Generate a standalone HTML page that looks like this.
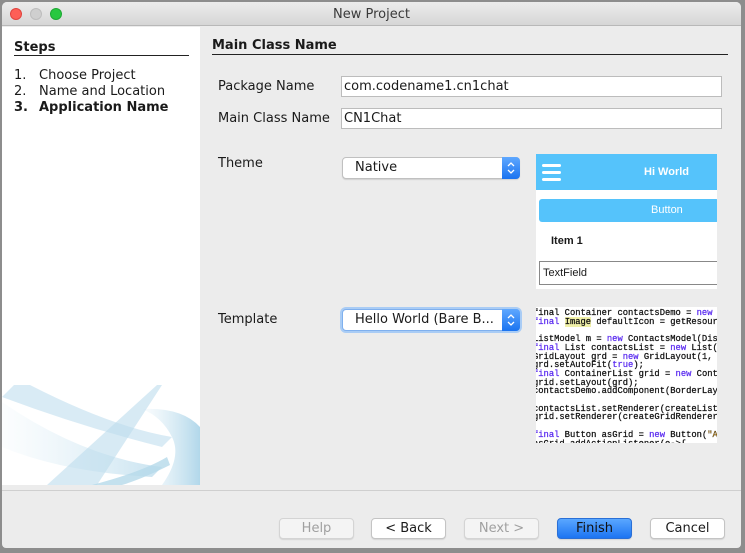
<!DOCTYPE html>
<html><head><meta charset="utf-8"><style>
*{margin:0;padding:0;box-sizing:border-box}
body{width:745px;height:553px;background:#8d8d8d;position:relative;overflow:hidden;font-family:"DejaVu Sans","Liberation Sans",sans-serif;font-size:13px;color:#1a1a1a}
.a{position:absolute}
#win{left:2px;top:2px;width:739px;height:546px;background:#ececec;border-radius:5px 5px 4px 4px;overflow:hidden}
#title{left:0;top:0;width:739px;height:24px;background:linear-gradient(#ececec,#d6d6d6);border-bottom:1px solid #b8b8b8;text-align:center;line-height:26px;color:#3a3a3a;font-size:13px}
.dot{top:6px;width:12px;height:12px;border-radius:50%}
.f{background:#fff;border:1px solid #bcbcbc;height:21px;line-height:19px;padding-left:2px;font-size:13px}
.sel{background:#fff;border:1px solid #c0c0c0;border-radius:4px;height:22px;line-height:20px;padding-left:12px;font-size:13px;box-shadow:0 1px 1px rgba(0,0,0,.12)}
.arr{position:absolute;right:-1px;top:-1px;width:18px;height:22px;background:linear-gradient(#5fa8ff,#1a73f0);border-radius:0 4px 4px 0}
.btn{top:516px;height:21px;border-radius:4px;background:#fff;border:1px solid #c4c4c4;text-align:center;line-height:19px;font-size:13px;box-shadow:0 1px 1px rgba(0,0,0,.1)}
.dis{background:#f4f4f4;color:#a0a0a0;border-color:#d4d4d4}
pre{font-family:"Liberation Mono",monospace;font-size:8.8px;line-height:8.7px;color:#111;-webkit-text-stroke:0.25px #111}
.k{color:#5b2cf0;-webkit-text-stroke:0.25px #5b2cf0}
</style></head><body>
<div id="win" class="a">
<div id="title" class="a">New Project</div>
<div class="a dot" style="left:8px;background:#fd5f57;border:1px solid #e0443e"></div>
<div class="a dot" style="left:28px;background:#cfcfcf;border:1px solid #bdbdbd"></div>
<div class="a dot" style="left:48px;background:#28c840;border:1px solid #1ea834"></div>
<!-- left panel -->
<div class="a" style="left:0;top:25px;width:198px;height:458px;background:#fff;overflow:hidden">
<div class="a" style="left:12px;top:13px;font-weight:bold">Steps</div>
<div class="a" style="left:12px;top:28px;width:175px;height:1px;background:#222"></div>
<div class="a" style="left:12px;top:41px">1.</div><div class="a" style="left:37px;top:41px">Choose Project</div>
<div class="a" style="left:12px;top:57px">2.</div><div class="a" style="left:37px;top:57px">Name and Location</div>
<div class="a" style="left:12px;top:73px;font-weight:bold">3.</div><div class="a" style="left:37px;top:73px;font-weight:bold">Application Name</div>
<svg class="a" style="left:0;top:330px" width="198" height="128" viewBox="0 0 198 128">
<defs><linearGradient id="g" x1="0" x2="1"><stop offset="0" stop-color="#cfe6f2" stop-opacity=".1"/><stop offset="1" stop-color="#a9d3e8" stop-opacity=".9"/></linearGradient></defs>
<path d="M12 28 L28 28 Q110 70 170 80 L160 90 Q80 70 0 40Z" fill="#cfe6f2" opacity=".8"/>
<path d="M0 45 Q80 100 160 110 L150 120 Q60 115 0 90Z" fill="url(#g)" opacity=".7"/>
<path d="M140 52 Q180 50 198 70 L198 128 L160 128 Q180 100 170 80 Q160 60 140 52Z" fill="url(#g)"/>
<path d="M155 28 L160 28 L95 128 L45 128Z" fill="#bddcec" opacity=".6"/>
<path d="M90 128 Q140 115 165 100 L168 108 Q140 122 120 128Z" fill="#b5d9ea" opacity=".8"/>
</svg>
</div>
<!-- right -->
<div class="a" style="left:210px;top:36px;font-weight:bold">Main Class Name</div>
<div class="a" style="left:210px;top:52px;width:516px;height:1px;background:#222"></div>
<div class="a" style="left:216px;top:77px">Package Name</div>
<div class="a f" style="left:339px;top:74px;width:381px">com.codename1.cn1chat</div>
<div class="a" style="left:216px;top:109px">Main Class Name</div>
<div class="a f" style="left:339px;top:106px;width:381px">CN1Chat</div>
<div class="a" style="left:216px;top:154px">Theme</div>
<div class="a sel" style="left:340px;top:155px;width:178px">Native<div class="arr"><svg width="18" height="22"><path d="M6 9 L9 6 L12 9 M6 13 L9 16 L12 13" fill="none" stroke="#fff" stroke-width="1.3"/></svg></div></div>
<div class="a" style="left:216px;top:310px">Template</div>
<div class="a sel" style="left:340px;top:307px;width:178px;border-color:#7fb0ee;box-shadow:0 0 0 2px #a9ccf5">Hello World (Bare B...<div class="arr"><svg width="18" height="22"><path d="M6 9 L9 6 L12 9 M6 13 L9 16 L12 13" fill="none" stroke="#fff" stroke-width="1.3"/></svg></div></div>
<!-- preview -->
<div class="a" style="left:534px;top:152px;width:181px;height:135px;background:#fff;overflow:hidden">
<div class="a" style="left:0;top:0;width:181px;height:36px;background:#55c3fb"></div>
<div class="a" style="left:6px;top:10px;width:19px;height:3px;background:#fff;border-radius:2px"></div>
<div class="a" style="left:6px;top:17px;width:19px;height:3px;background:#fff;border-radius:2px"></div>
<div class="a" style="left:6px;top:24px;width:19px;height:3px;background:#fff;border-radius:2px"></div>
<div class="a" style="left:108px;top:12px;color:#fff;font-family:'Liberation Sans',sans-serif;font-weight:bold;font-size:11px">Hi World</div>
<div class="a" style="left:3px;top:45px;width:180px;height:23px;background:#55c3fb;border-radius:3px;color:#fff;font-family:'Liberation Sans',sans-serif;font-size:11px;line-height:23px;padding-left:112px">Button</div>
<div class="a" style="left:15px;top:81px;font-family:'Liberation Sans',sans-serif;font-weight:bold;font-size:11px">Item 1</div>
<div class="a" style="left:3px;top:107px;width:180px;height:24px;border:1px solid #888;font-family:'Liberation Sans',sans-serif;font-size:11px;line-height:22px;padding-left:3px">TextField</div>
</div>
<div class="a" style="left:534px;top:305px;width:181px;height:136px;background:#fff;overflow:hidden">
<pre style="margin-left:-3px;margin-top:2px">final Container contactsDemo = <span class="k">new</span>
<span class="k">final</span> <span style="background:#f0f0a8">Image</span> defaultIcon = getResour
 
ListModel m = <span class="k">new</span> ContactsModel(Dis
<span class="k">final</span> List contactsList = <span class="k">new</span> List(
GridLayout grd = <span class="k">new</span> GridLayout(1,
grd.setAutoFit(<span class="k">true</span>);
<span class="k">final</span> ContainerList grid = <span class="k">new</span> Cont
grid.setLayout(grd);
contactsDemo.addComponent(BorderLay
 
contactsList.setRenderer(createList
grid.setRenderer(createGridRenderer
 
<span class="k">final</span> Button asGrid = <span class="k">new</span> Button(<span style="color:#c80">"A</span>
asGrid.addActionListener(e-&gt;{</pre>
</div>
<div class="a" style="left:0;top:488px;width:739px;height:1px;background:#cfcfcf"></div>
<div class="a btn dis" style="left:277px;width:75px">Help</div>
<div class="a btn" style="left:369px;width:75px">&lt; Back</div>
<div class="a btn dis" style="left:462px;width:75px">Next &gt;</div>
<div class="a btn" style="left:555px;width:75px;background:linear-gradient(#5aa7ff,#1c74f2);border-color:#2a6fd6;color:#111">Finish</div>
<div class="a btn" style="left:648px;width:75px">Cancel</div>
</div>
</body></html>
